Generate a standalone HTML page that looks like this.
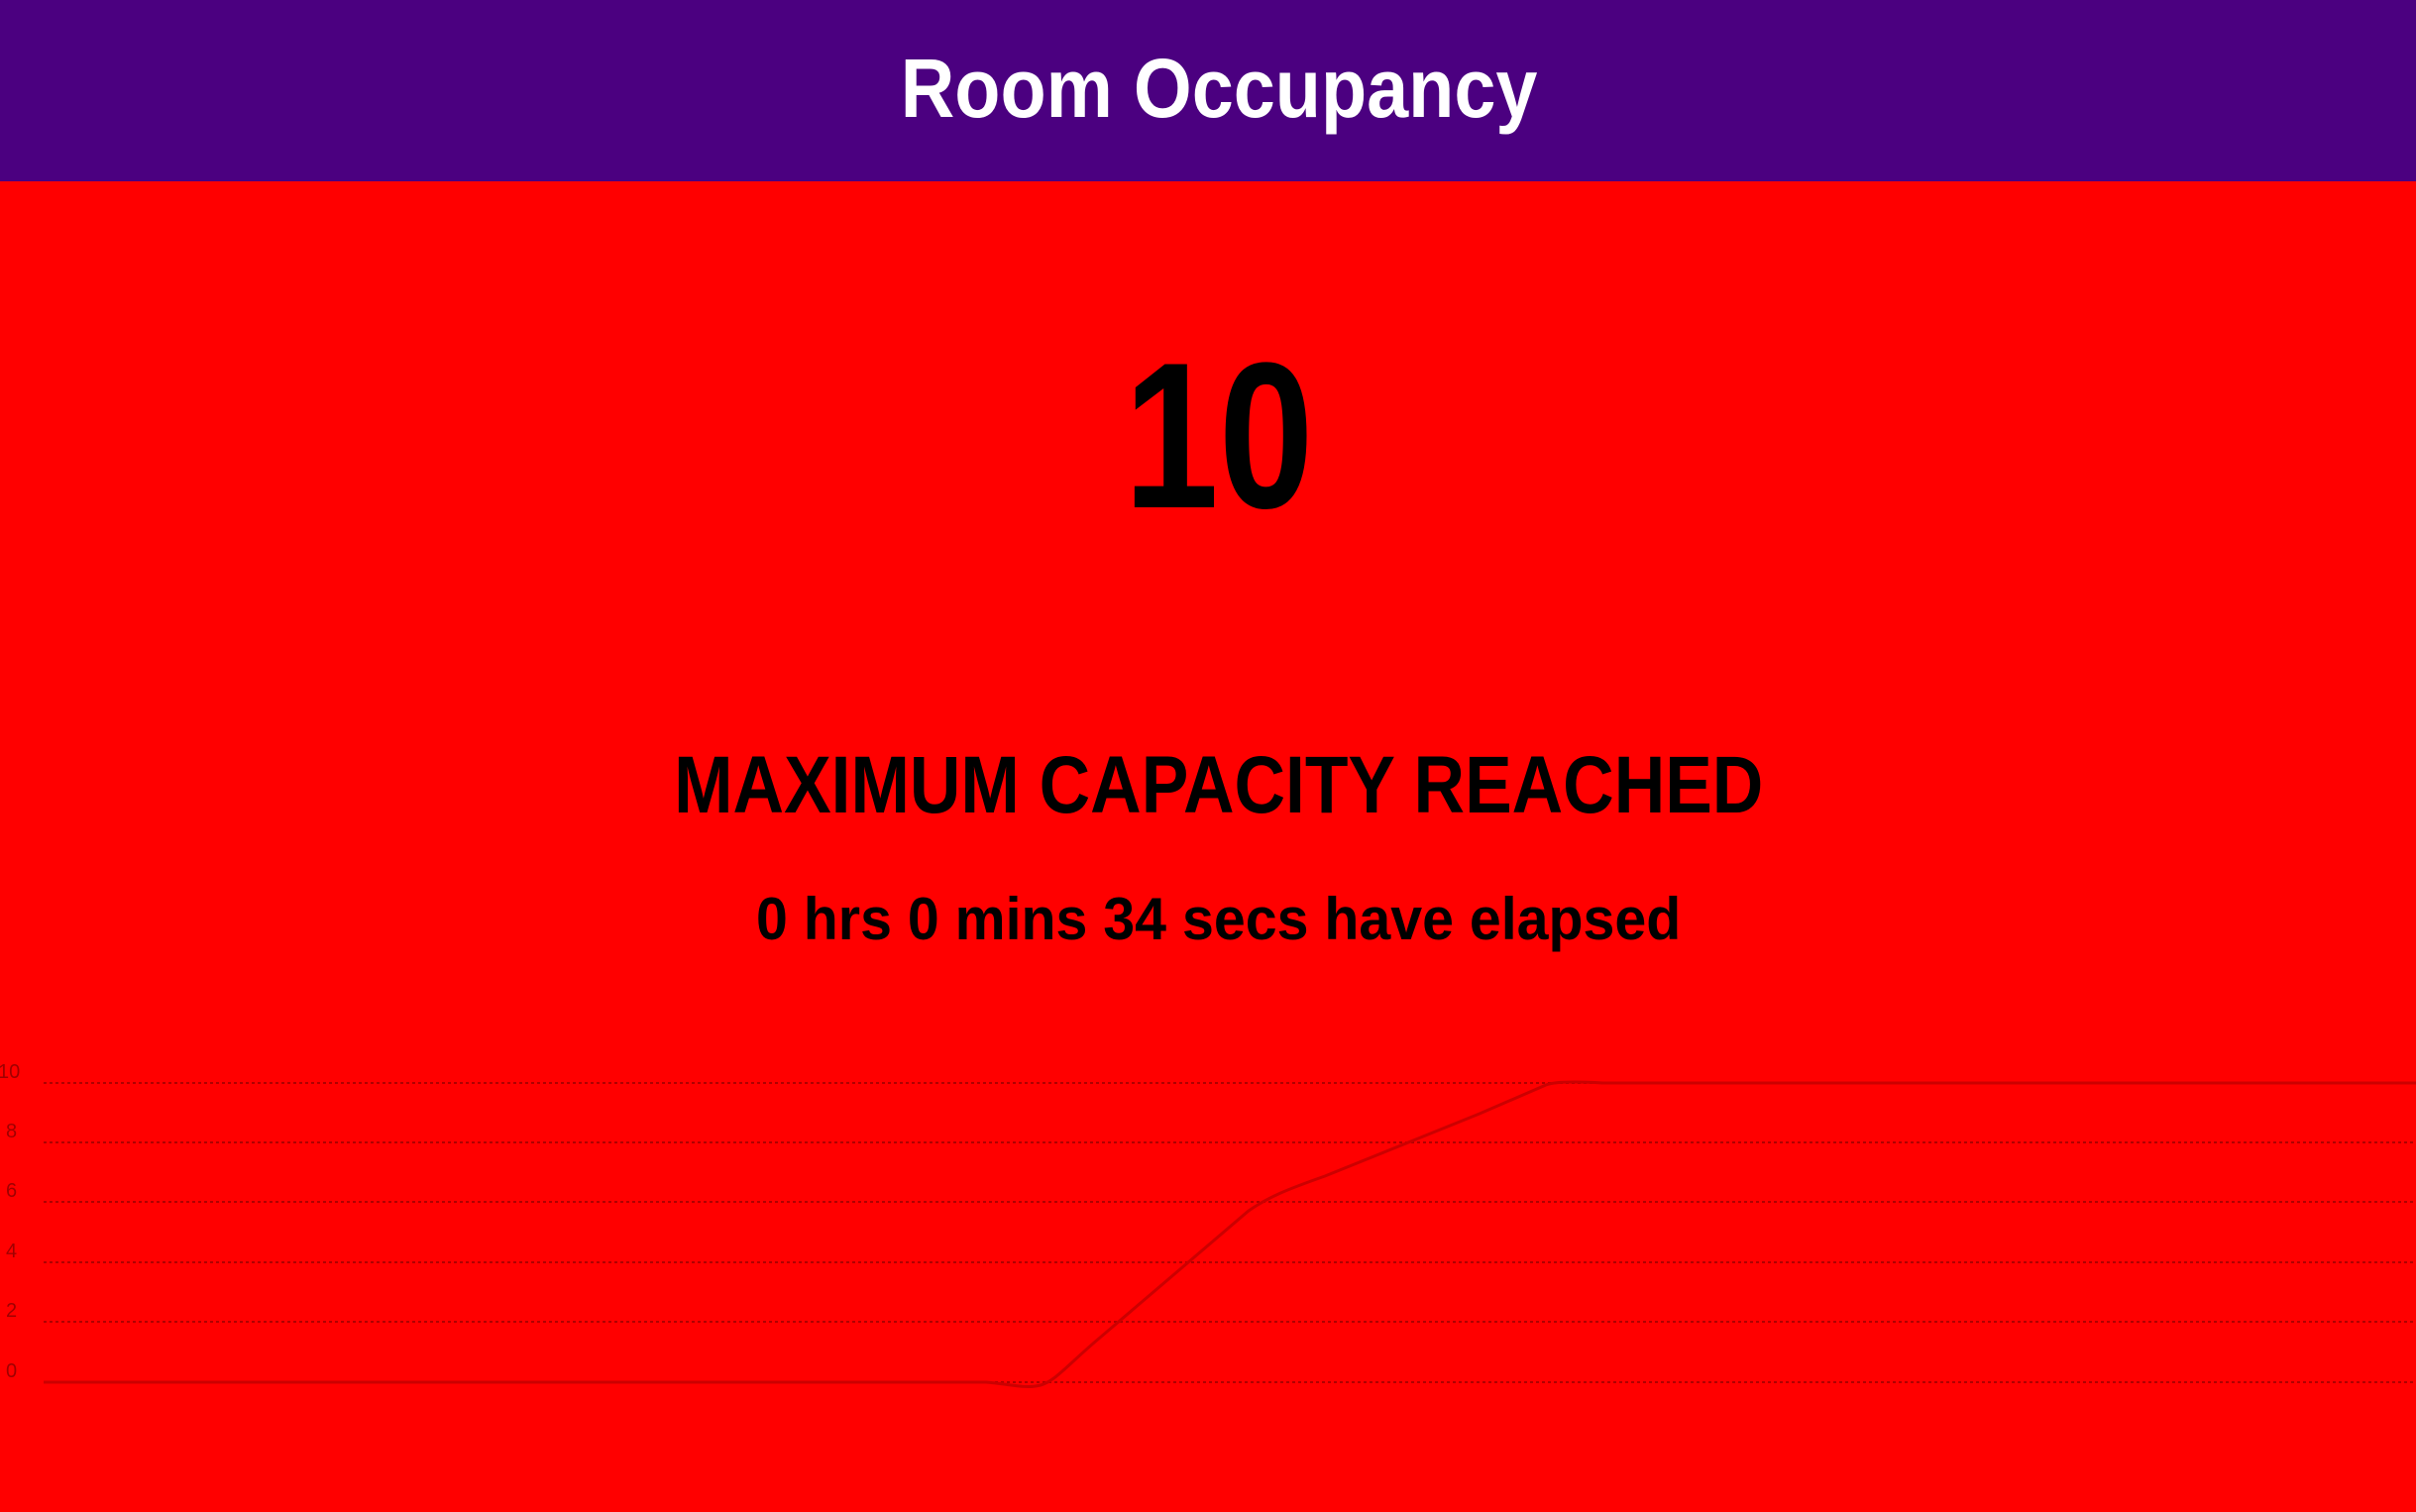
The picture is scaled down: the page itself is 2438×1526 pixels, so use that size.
<!DOCTYPE html>
<html><head><meta charset="utf-8"><style>
html,body{margin:0;padding:0;width:2438px;height:1526px;overflow:hidden;background:#ff0000;font-family:"Liberation Sans",sans-serif;}
.hdr{position:absolute;left:0;top:0;width:2438px;height:183px;background:#4b0080;}
.t{position:absolute;left:0;width:2460px;text-align:center;line-height:1;white-space:nowrap;}
.t span{display:inline-block;}
</style></head><body>
<div class="hdr"></div>
<div class="t" style="top:47px;font-size:84px;font-weight:bold;color:#fff;"><span style="transform:scaleX(0.9)">Room Occupancy</span></div>
<div class="t" style="top:335px;font-size:210px;font-weight:bold;color:#000;"><span style="transform:scaleX(0.82)">10</span></div>
<div class="t" style="top:752px;font-size:82px;font-weight:bold;color:#000;"><span style="transform:scaleX(0.87)">MAXIMUM CAPACITY REACHED</span></div>
<div class="t" style="top:898px;font-size:60px;font-weight:bold;color:#000;"><span style="transform:scaleX(0.955)">0 hrs 0 mins 34 secs have elapsed</span></div>
<svg style="position:absolute;left:0;top:0" width="2438" height="1526">
<g stroke="#b00000" stroke-width="2" stroke-dasharray="3,3">
<line x1="44" y1="1093" x2="2438" y2="1093"/>
<line x1="44" y1="1153" x2="2438" y2="1153"/>
<line x1="44" y1="1213" x2="2438" y2="1213"/>
<line x1="44" y1="1274" x2="2438" y2="1274"/>
<line x1="44" y1="1334" x2="2438" y2="1334"/>
<line x1="44" y1="1395" x2="2438" y2="1395"/>
</g>
<g fill="#a00000" font-family="Liberation Sans, sans-serif" font-size="20">
<text x="-2" y="1088">10</text>
<text x="6" y="1148">8</text>
<text x="6" y="1208">6</text>
<text x="6" y="1269">4</text>
<text x="6" y="1329">2</text>
<text x="6" y="1390">0</text>
</g>
<path d="M44,1395 L995,1395 C1020,1397 1035,1402 1050,1398 C1065,1394 1080,1375 1110,1350 L1260,1222 C1280,1208 1300,1200 1337,1187 L1493,1124 L1560,1095 C1570,1091 1600,1092 1617,1093 L2438,1093" fill="none" stroke="#cc0000" stroke-width="3"/>
</svg>
</body></html>
